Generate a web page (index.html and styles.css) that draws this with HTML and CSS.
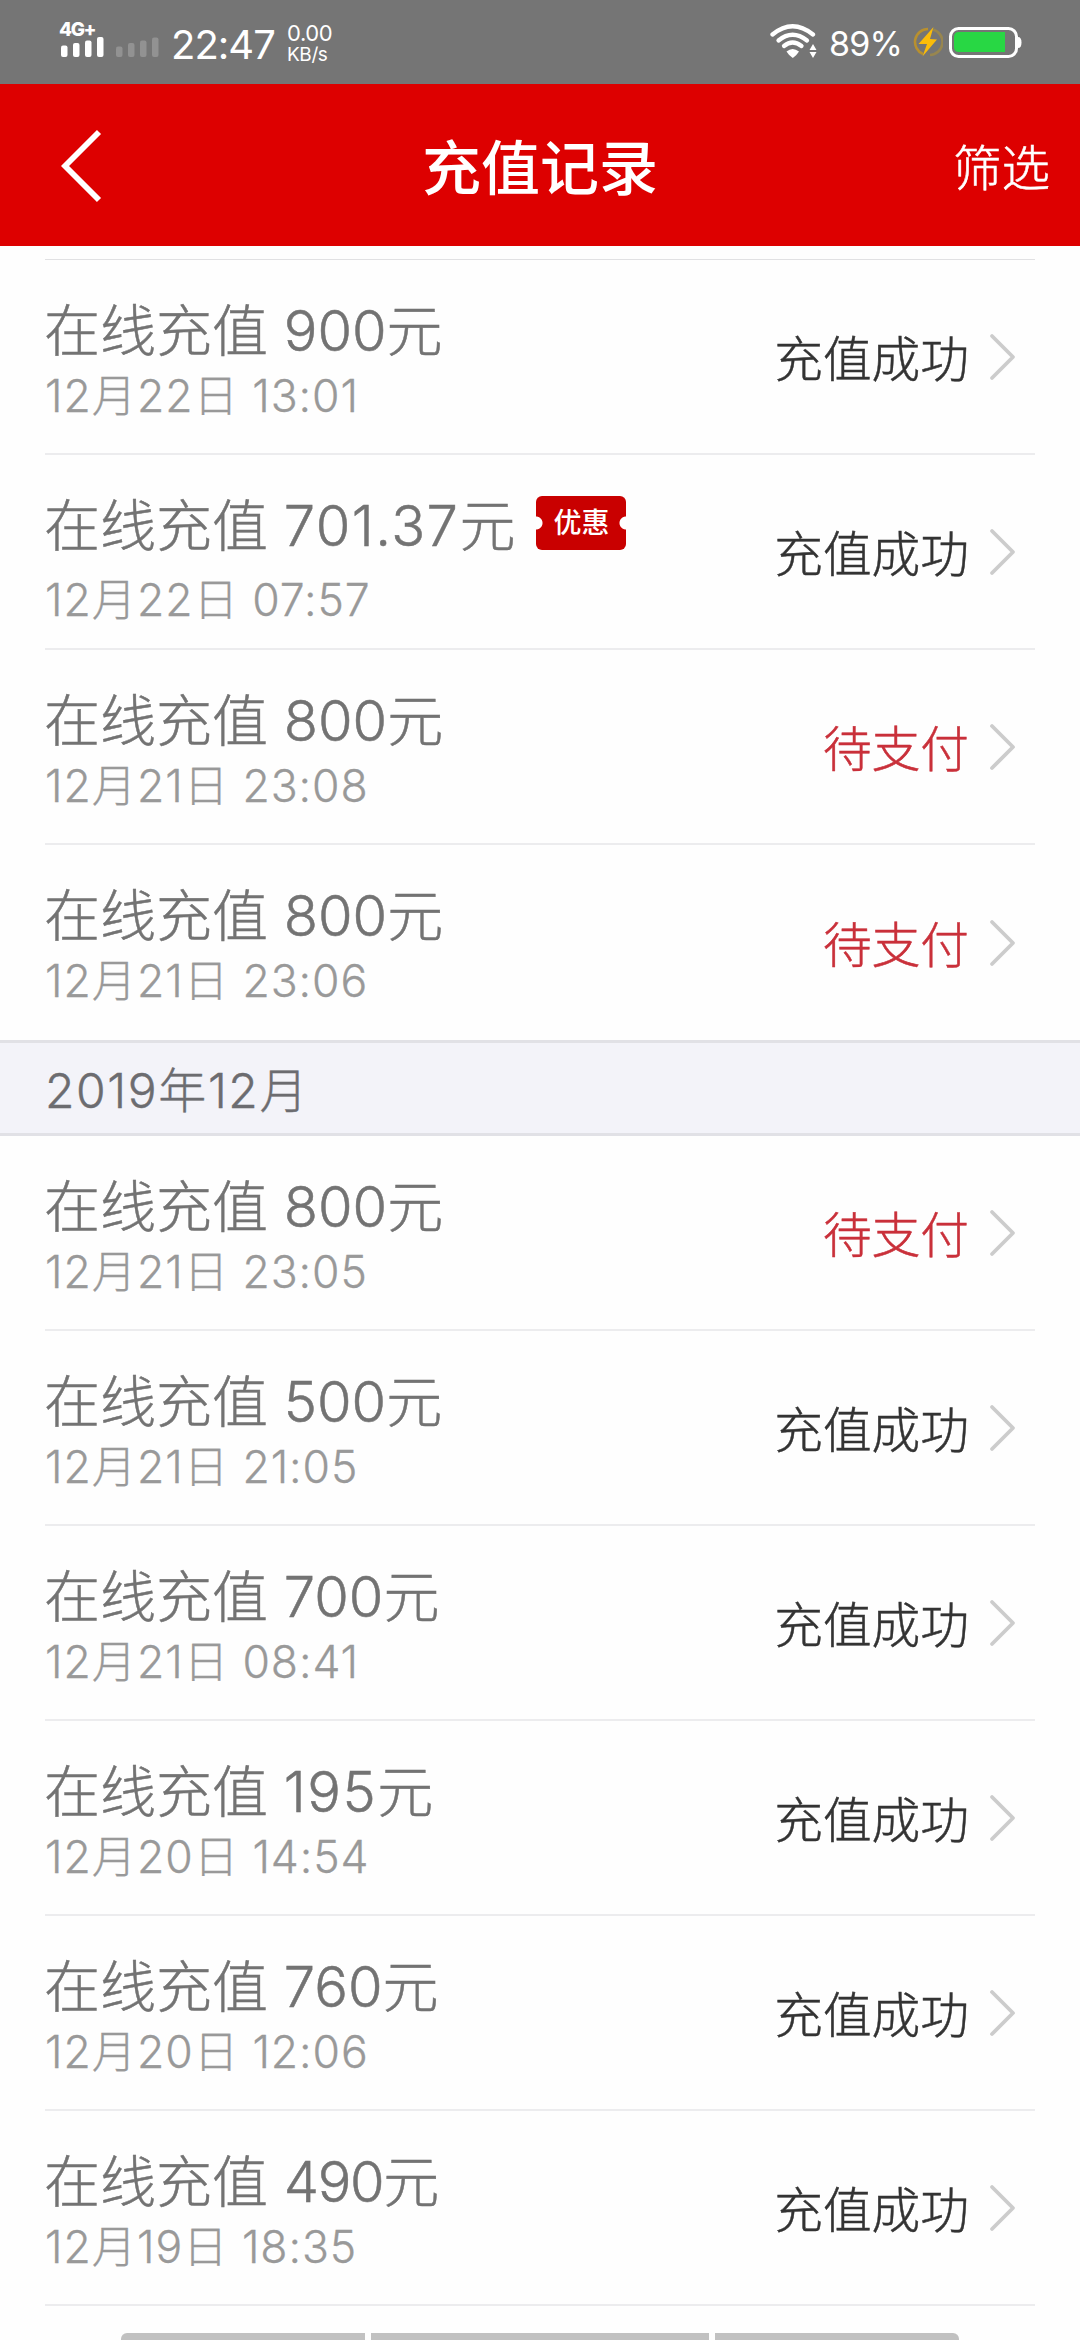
FILE: index.html
```html
<!DOCTYPE html>
<html lang="zh-CN">
<head>
<meta charset="utf-8">
<title>充值记录</title>
<link rel="stylesheet" href="styles.css">
</head>
<body>
<svg width="0" height="0" class="defs"><symbol id="chev" viewBox="0 0 28 48"><path d="M3 3L24 24L3 45" fill="none" stroke="#ccc" stroke-width="3.8" stroke-linecap="round" stroke-linejoin="round"/></symbol></svg>
<div class="screen">
<div class="statusbar">
  <div class="signal">
    <span class="net">4G+</span>
    <svg width="44" height="20" viewBox="0 0 44 20"><g fill="#fff"><rect x="0" y="8.5" width="6.5" height="11.5" rx="2"/><rect x="12" y="6" width="6.5" height="14" rx="2"/><rect x="24" y="3.5" width="6.5" height="16.5" rx="2"/><rect x="36" y="0" width="6.5" height="20" rx="2"/></g></svg>
  </div>
  <svg class="signal2" width="44" height="20" viewBox="0 0 44 20"><g fill="#929292"><rect x="0" y="9.500" width="6.500" height="10.500" rx="2"/><rect x="12" y="6" width="6.500" height="14" rx="2"/><rect x="24" y="3.500" width="6.500" height="16.500" rx="2"/><rect x="36" y="0.500" width="6.500" height="19.500" rx="2"/></g></svg>
  <span class="clock">22:47</span>
  <span class="speed"><span>0.00</span><span class="unit">KB/s</span></span>
  <svg class="wifi" width="48" height="36" viewBox="0 0 48 36"><g fill="none" stroke="#fff" stroke-width="4.300" stroke-linecap="round"><path d="M2.500 10.500Q22.500 -6 43 10.500"/><path d="M8.500 16.500Q22.500 5 37 16.500"/><path d="M14 22Q22.500 15 31.500 22"/></g><path d="M16.500 27.500Q22.500 22.500 29 27.500Q27 31 22.800 34Q18.500 31 16.500 27.500Z" fill="#fff"/><path d="M43 20L46.500 26H39.500ZM39.500 28H46.500L43 34Z" fill="#fff"/></svg>
  <span class="pct">89%</span>
  <svg class="bolt" width="30" height="30" viewBox="0 0 30 30"><g fill="none" stroke-width="2.600"><path d="M10 27A13 13 0 0 1 15 2" stroke="#b8902f"/><path d="M20 2.500A13 13 0 0 1 17 28" stroke="#98864f"/></g><path d="M20.500 0L5.500 17L14 17L9.500 29.500L24 12.500L17 12Z" fill="#fbbc09"/></svg>
  <svg class="battery" width="74" height="32" viewBox="0 0 74 32"><rect x="1.500" y="1.500" width="66" height="28" rx="8" fill="none" stroke="#fff" stroke-width="3"/><path d="M10 5H56V25H10Q5 25 5 20V10Q5 5 10 5Z" fill="#28d744"/><path d="M69 10Q72.500 10 72.500 15.500T69 21Z" fill="#fff"/></svg>
</div>
<header class="navbar">
  <svg class="back" width="42" height="76" viewBox="0 0 42 76"><path d="M38 4L4 38L38 72" fill="none" stroke="#fff" stroke-width="5.800"/></svg>
  <h1 class="heading">充值记录</h1>
  <span class="filter">筛选</span>
</header>
<main>
  <ul class="list first">
    <li class="row"><div class="info"><div class="title">在线充值 900元</div><div class="date">12月22日 13:01</div></div><span class="state">充值成功</span><svg class="chev"><use href="#chev"/></svg></li>
    <li class="row promo"><div class="info"><div class="title">在线充值 <span class="wide">701.37</span>元<span class="coupon">优惠</span></div><div class="date">12月22日 07:57</div></div><span class="state">充值成功</span><svg class="chev"><use href="#chev"/></svg></li>
    <li class="row"><div class="info"><div class="title">在线充值 800元</div><div class="date">12月21日 23:08</div></div><span class="state pending">待支付</span><svg class="chev"><use href="#chev"/></svg></li>
    <li class="row last"><div class="info"><div class="title">在线充值 800元</div><div class="date">12月21日 23:06</div></div><span class="state pending">待支付</span><svg class="chev"><use href="#chev"/></svg></li>
  </ul>
  <h2 class="month">2019年12月</h2>
  <ul class="list">
    <li class="row"><div class="info"><div class="title">在线充值 800元</div><div class="date">12月21日 23:05</div></div><span class="state pending">待支付</span><svg class="chev"><use href="#chev"/></svg></li>
    <li class="row"><div class="info"><div class="title">在线充值 500元</div><div class="date">12月21日 21:05</div></div><span class="state">充值成功</span><svg class="chev"><use href="#chev"/></svg></li>
    <li class="row"><div class="info"><div class="title">在线充值 700元</div><div class="date">12月21日 08:41</div></div><span class="state">充值成功</span><svg class="chev"><use href="#chev"/></svg></li>
    <li class="row"><div class="info"><div class="title">在线充值 <span class="wide">195</span>元</div><div class="date">12月20日 14:54</div></div><span class="state">充值成功</span><svg class="chev"><use href="#chev"/></svg></li>
    <li class="row"><div class="info"><div class="title">在线充值 760元</div><div class="date">12月20日 12:06</div></div><span class="state">充值成功</span><svg class="chev"><use href="#chev"/></svg></li>
    <li class="row"><div class="info"><div class="title">在线充值 <span class="tight">490</span>元</div><div class="date">12月19日 18:35</div></div><span class="state">充值成功</span><svg class="chev"><use href="#chev"/></svg></li>
  </ul>
</main>
<div class="gesture"><i></i><i></i><i></i></div>
</div>
</body>
</html>
```
FILE: styles.css
```css
* { box-sizing: border-box; }
body { margin: 0; background: #fff; font-family: Inter, "Noto Sans CJK SC", sans-serif; font-weight: 300; }
.defs { position: absolute; }
.screen { width: 1080px; height: 2340px; overflow: hidden; display: flex; flex-direction: column; background: #fefefe; }
.statusbar { height: 84px; flex: none; background: #757575; color: #fff; display: flex; align-items: flex-start; white-space: nowrap; }
.signal { margin: 22px 0 0 61px; width: 44px; display: flex; flex-direction: column; }
.net { font-size: 19px; font-weight: 800; line-height: 15px; height: 15px; letter-spacing: -1.4px; margin-left: -2px; }
.signal2 { margin: 37px 0 0 11px; }
.clock { margin: 21px 0 0 11px; width: 104px; font-size: 40px; line-height: 48px; font-weight: 400; letter-spacing: -1px; }
.speed { margin: 23px 0 0 12px; width: 60px; display: flex; flex-direction: column; font-size: 22px; line-height: 21px; font-weight: 400; letter-spacing: -0.4px; }
.unit { font-size: 19px; }
.wifi { margin: 24px 0 0 423px; }
.pct { margin: 23px 0 0 11px; width: 75px; font-size: 34px; line-height: 42px; font-weight: 400; letter-spacing: -0.8px; }
.bolt { margin: 27px 0 0 9px; }
.battery { margin: 27px 0 0 6px; }
.navbar { height: 162px; flex: none; background: #d00; color: #fff; display: grid; grid-template-columns: 250px 1fr 250px; align-items: center; }
.heading { margin: 7px 0 0; font-size: 59px; font-weight: 500; line-height: 80px; text-align: center; }
.back { margin: 2px 0 0 61px; }
.filter { justify-self: end; margin: 7px 30px 0 0; font-size: 48.5px; line-height: 70px; -webkit-text-stroke: 0.5px; }
.list { list-style: none; margin: 0; padding: 0 45px; }
.first { margin-top: 13px; }
.first::before { content: ""; display: block; height: 1px; background: #e1e1e3; }
.row { height: 195px; border-bottom: 2px solid #ececee; padding-right: 18px; display: flex; align-items: center; }
.last { border-bottom: 0; }
.info { flex: 1; align-self: flex-start; padding-top: 37px; }
.title { height: 68px; line-height: 70px; font-size: 56px; color: #737373; display: flex; align-items: center; white-space: pre; margin-left: -1px; -webkit-text-stroke: 0.5px; }
.wide { letter-spacing: 1.5px; }
.tight { letter-spacing: -1.3px; }
.date { height: 60px; line-height: 62px; font-size: 44.5px; color: #999; letter-spacing: 0.9px; -webkit-text-stroke: 0.3px; }
.promo .date { margin-top: 9px; }
.coupon { width: 90px; height: 54px; margin: -7px 0 0 21px; border-radius: 6px; background: radial-gradient(circle at 0 50%, #fff 6px, transparent 7px), radial-gradient(circle at 100% 50%, #fff 6px, transparent 7px), #c90000; color: #fff; font-size: 28px; font-weight: 500; line-height: 54px; text-align: center; -webkit-text-stroke: 0; }
.state { font-size: 48.7px; color: #333; line-height: 70px; padding-top: 6px; -webkit-text-stroke: 0.5px; }
.pending { color: #c9303a; }
.chev { width: 28px; height: 48px; margin-left: 20px; }
.month { margin: 0; height: 96px; border-top: 3px solid #e1e1e6; border-bottom: 3px solid #e1e1e6; background: #f3f3f9; color: #6c6c70; font-size: 48px; font-weight: 300; line-height: 96px; padding-left: 45px; letter-spacing: 1.6px; -webkit-text-stroke: 0.4px; }
.gesture { margin-top: auto; height: 7px; flex: none; padding: 0 121px; display: grid; grid-template-columns: 244px 338px 244px; gap: 6px; }
.gesture i { background: #c1c1c1; }
.gesture i:first-child { border-radius: 6px 0 0 0; }
.gesture i:last-child { border-radius: 0 6px 0 0; }
```
